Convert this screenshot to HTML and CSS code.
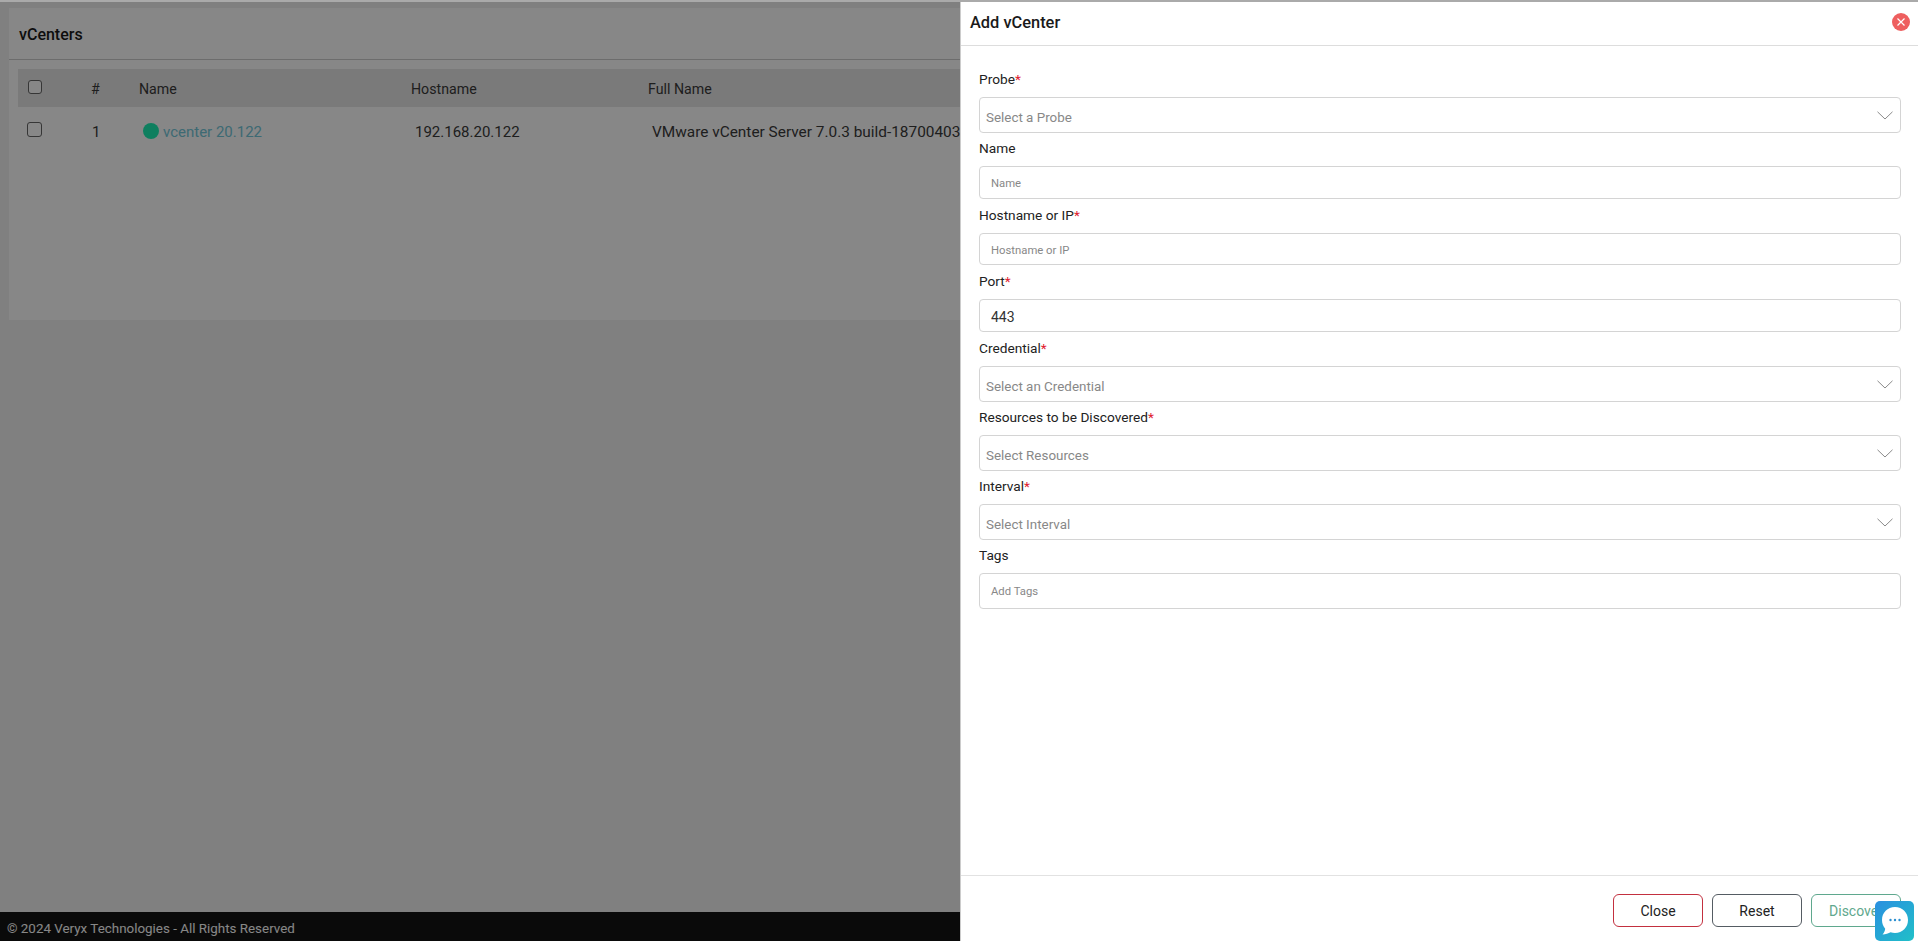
FILE: index.html
```html
<!DOCTYPE html>
<html lang="en">
<head>
<meta charset="utf-8">
<title>vCenters</title>
<link rel="stylesheet" href="styles.css">
</head>
<body>
<div class="page">
  <main class="content">
    <section class="card">
      <h1 class="card-title">vCenters</h1>
      <div class="table-wrap">
        <div class="tr thead">
          <div class="c-check"><span class="check"></span></div>
          <div class="c-num">#</div>
          <div class="c-name">Name</div>
          <div class="c-host">Hostname</div>
          <div class="c-full">Full Name</div>
        </div>
        <div class="tr tbody">
          <div class="c-check"><span class="check"></span></div>
          <div class="c-num">1</div>
          <div class="c-name"><span class="dot"></span><a class="link">vcenter 20.122</a></div>
          <div class="c-host">192.168.20.122</div>
          <div class="c-full">VMware vCenter Server 7.0.3 build-18700403</div>
        </div>
      </div>
    </section>
  </main>
  <footer class="footer">© 2024 Veryx Technologies - All Rights Reserved</footer>
</div>
<div class="backdrop"></div>
<aside class="drawer">
  <header class="drawer-head">
    <h2>Add vCenter</h2>
    <span class="close-x">
      <svg width="18" height="18" viewBox="0 0 18 18"><circle cx="9" cy="9" r="9" fill="#ee5f5f"/><path d="M5.500 5.500l7 7M12.500 5.500l-7 7" stroke="#fff" stroke-width="1.2" fill="none"/></svg>
    </span>
  </header>
  <form class="drawer-body">
    <label class="lbl">Probe<em>*</em></label>
    <div class="field select">Select a Probe<svg class="chev" width="16" height="9" viewBox="0 0 16 9"><path d="M.5.8L8 8l7.500-7.200" fill="none" stroke="#8a8a8a"/></svg></div>
    <label class="lbl">Name</label>
    <div class="field text ph">Name</div>
    <label class="lbl">Hostname or IP<em>*</em></label>
    <div class="field text ph">Hostname or IP</div>
    <label class="lbl">Port<em>*</em></label>
    <div class="field text val">443</div>
    <label class="lbl">Credential<em>*</em></label>
    <div class="field select">Select an Credential<svg class="chev" width="16" height="9" viewBox="0 0 16 9"><path d="M.5.8L8 8l7.500-7.200" fill="none" stroke="#8a8a8a"/></svg></div>
    <label class="lbl">Resources to be Discovered<em>*</em></label>
    <div class="field select">Select Resources<svg class="chev" width="16" height="9" viewBox="0 0 16 9"><path d="M.5.8L8 8l7.500-7.200" fill="none" stroke="#8a8a8a"/></svg></div>
    <label class="lbl">Interval<em>*</em></label>
    <div class="field select">Select Interval<svg class="chev" width="16" height="9" viewBox="0 0 16 9"><path d="M.5.8L8 8l7.500-7.200" fill="none" stroke="#8a8a8a"/></svg></div>
    <label class="lbl">Tags</label>
    <div class="field tags ph">Add Tags</div>
  </form>
  <footer class="drawer-foot">
    <button class="btn btn-close" type="button">Close</button>
    <button class="btn btn-reset" type="button">Reset</button>
    <button class="btn btn-disc" type="button">Discover</button>
  </footer>
</aside>
<div class="chat">
  <svg width="28" height="30" viewBox="0 0 28 30"><path d="M14 1C6.500 1 1 6.600 1 14c0 3.400 1.200 6.400 3.200 8.700C4 24.800 3 26.900 1.500 28.500c3.200-.2 6-1.200 8.100-2.300 1.400.5 2.900.8 4.400.8 7.500 0 13-5.600 13-13S21.500 1 14 1z" fill="#fff"/><circle cx="9.500" cy="14" r="1.200" fill="#2b8fd0"/><circle cx="14" cy="14" r="1.200" fill="#2b8fd0"/><circle cx="18.500" cy="14" r="1.200" fill="#2b8fd0"/></svg>
</div>
</body>
</html>
```
FILE: styles.css
```css
* { box-sizing: border-box; }
html, body { margin: 0; height: 100%; overflow: hidden; }
body { font-family: Roboto, "Noto Sans", sans-serif; font-size: 14px; color: #3a3a3a; background: #f1f1f1; }
.page { height: 941px; display: flex; flex-direction: column; border-top: 2px solid #aaa; }
.content { flex: 1; padding: 6px 0 0 9px; }
.card { background: #fff; height: 312px; }
.card-title { margin: 0; height: 52px; padding: 2px 0 0 10px; display: flex; align-items: center; font-size: 16px; font-weight: 500; color: #1a1a1a; border-bottom: 1px solid #ccc; }
.table-wrap { padding: 9px 0 0 9px; }
.tr { display: flex; align-items: center; padding-top: 2px; }
.thead { height: 38px; background: #e6e6e6; font-size: 14.2px; }
.tbody { height: 47px; font-size: 15px; }
.c-check { width: 73px; padding-left: 10px; display: flex; }
.c-num { width: 48px; }
.c-name { width: 272px; display: flex; align-items: center; }
.c-host { width: 237px; }
.c-full { white-space: nowrap; }
.tbody .c-name { padding-left: 4px; }
.tbody .c-host { padding-left: 4px; }
.tbody .c-full { padding-left: 4px; font-size: 15.4px; }
.tbody .c-num { padding-left: 1px; }
.check { display: block; width: 14px; height: 14px; margin-top: -5px; border: 1px solid #666; border-radius: 3px; background: #fff; }
.tbody .check { width: 15px; height: 15px; margin-left: -1px; }
.dot { display: inline-block; width: 16px; height: 16px; border-radius: 50%; background: #1cf0b4; margin: -1px 4px 0 0; }
.link { color: #74c8da; }
.footer { height: 29px; background: #141414; color: #fff; font-size: 13.4px; padding: 3px 0 0 7px; display: flex; align-items: center; flex: none; }
.backdrop { position: fixed; inset: 2px 0 0 0; background: rgba(0,0,0,.47); }
.drawer { position: fixed; top: 2px; right: 0; bottom: 0; width: 958px; background: #fff; border-left: 1px solid #ccc; display: flex; flex-direction: column; }
.drawer-head { height: 44px; flex: none; display: flex; align-items: center; justify-content: space-between; padding: 0 8px 3px 9px; border-bottom: 1px solid #ddd; }
.drawer-head h2 { margin: 0; font-size: 16.4px; font-weight: 500; color: #1a1a1a; }
.close-x { display: flex; }
.drawer-body { flex: 1; padding: 24px 17px 0 18px; display: flex; flex-direction: column; }
.lbl { display: block; height: 18px; line-height: 18px; font-size: 13.7px; color: #222; }
.lbl em { color: #e01b2f; font-style: normal; }
.field { flex: none; border: 1px solid #d4d4d4; border-radius: 4px; background: #fff; display: flex; align-items: center; position: relative; margin: 9px 0 7px; }
.select { height: 35.5px; margin-bottom: 6.5px; padding: 5px 0 0 6px; font-size: 13.4px; color: #888; }
.text { height: 32.7px; padding: 3px 0 0 11px; }
.tags { height: 36px; padding-left: 11px; }
.ph { font-size: 11.3px; color: #888; }
.val { font-size: 14px; color: #333; padding-top: 2px; }
.chev { position: absolute; right: 7px; top: 13px; }
.drawer-foot { height: 66px; flex: none; border-top: 1px solid #e2e2e2; display: flex; justify-content: flex-end; gap: 9px; padding: 18px 17px 0 0; }
.btn { width: 90px; height: 33px; border-radius: 6px; background: #fff; font: 14px Roboto, "Noto Sans", sans-serif; color: #222; border: 1px solid #555; padding: 1px 0 0; }
.btn-close { border-color: #c3303f; }
.btn-reset { border-color: #555c63; }
.btn-disc { border-color: #5fa88e; color: #5fa88e; }
.chat { position: fixed; right: 4px; bottom: 0; width: 39px; height: 40px; border-radius: 5px; background: linear-gradient(135deg, #2a8fe0, #20c0c8); display: flex; align-items: center; justify-content: center; }
```
